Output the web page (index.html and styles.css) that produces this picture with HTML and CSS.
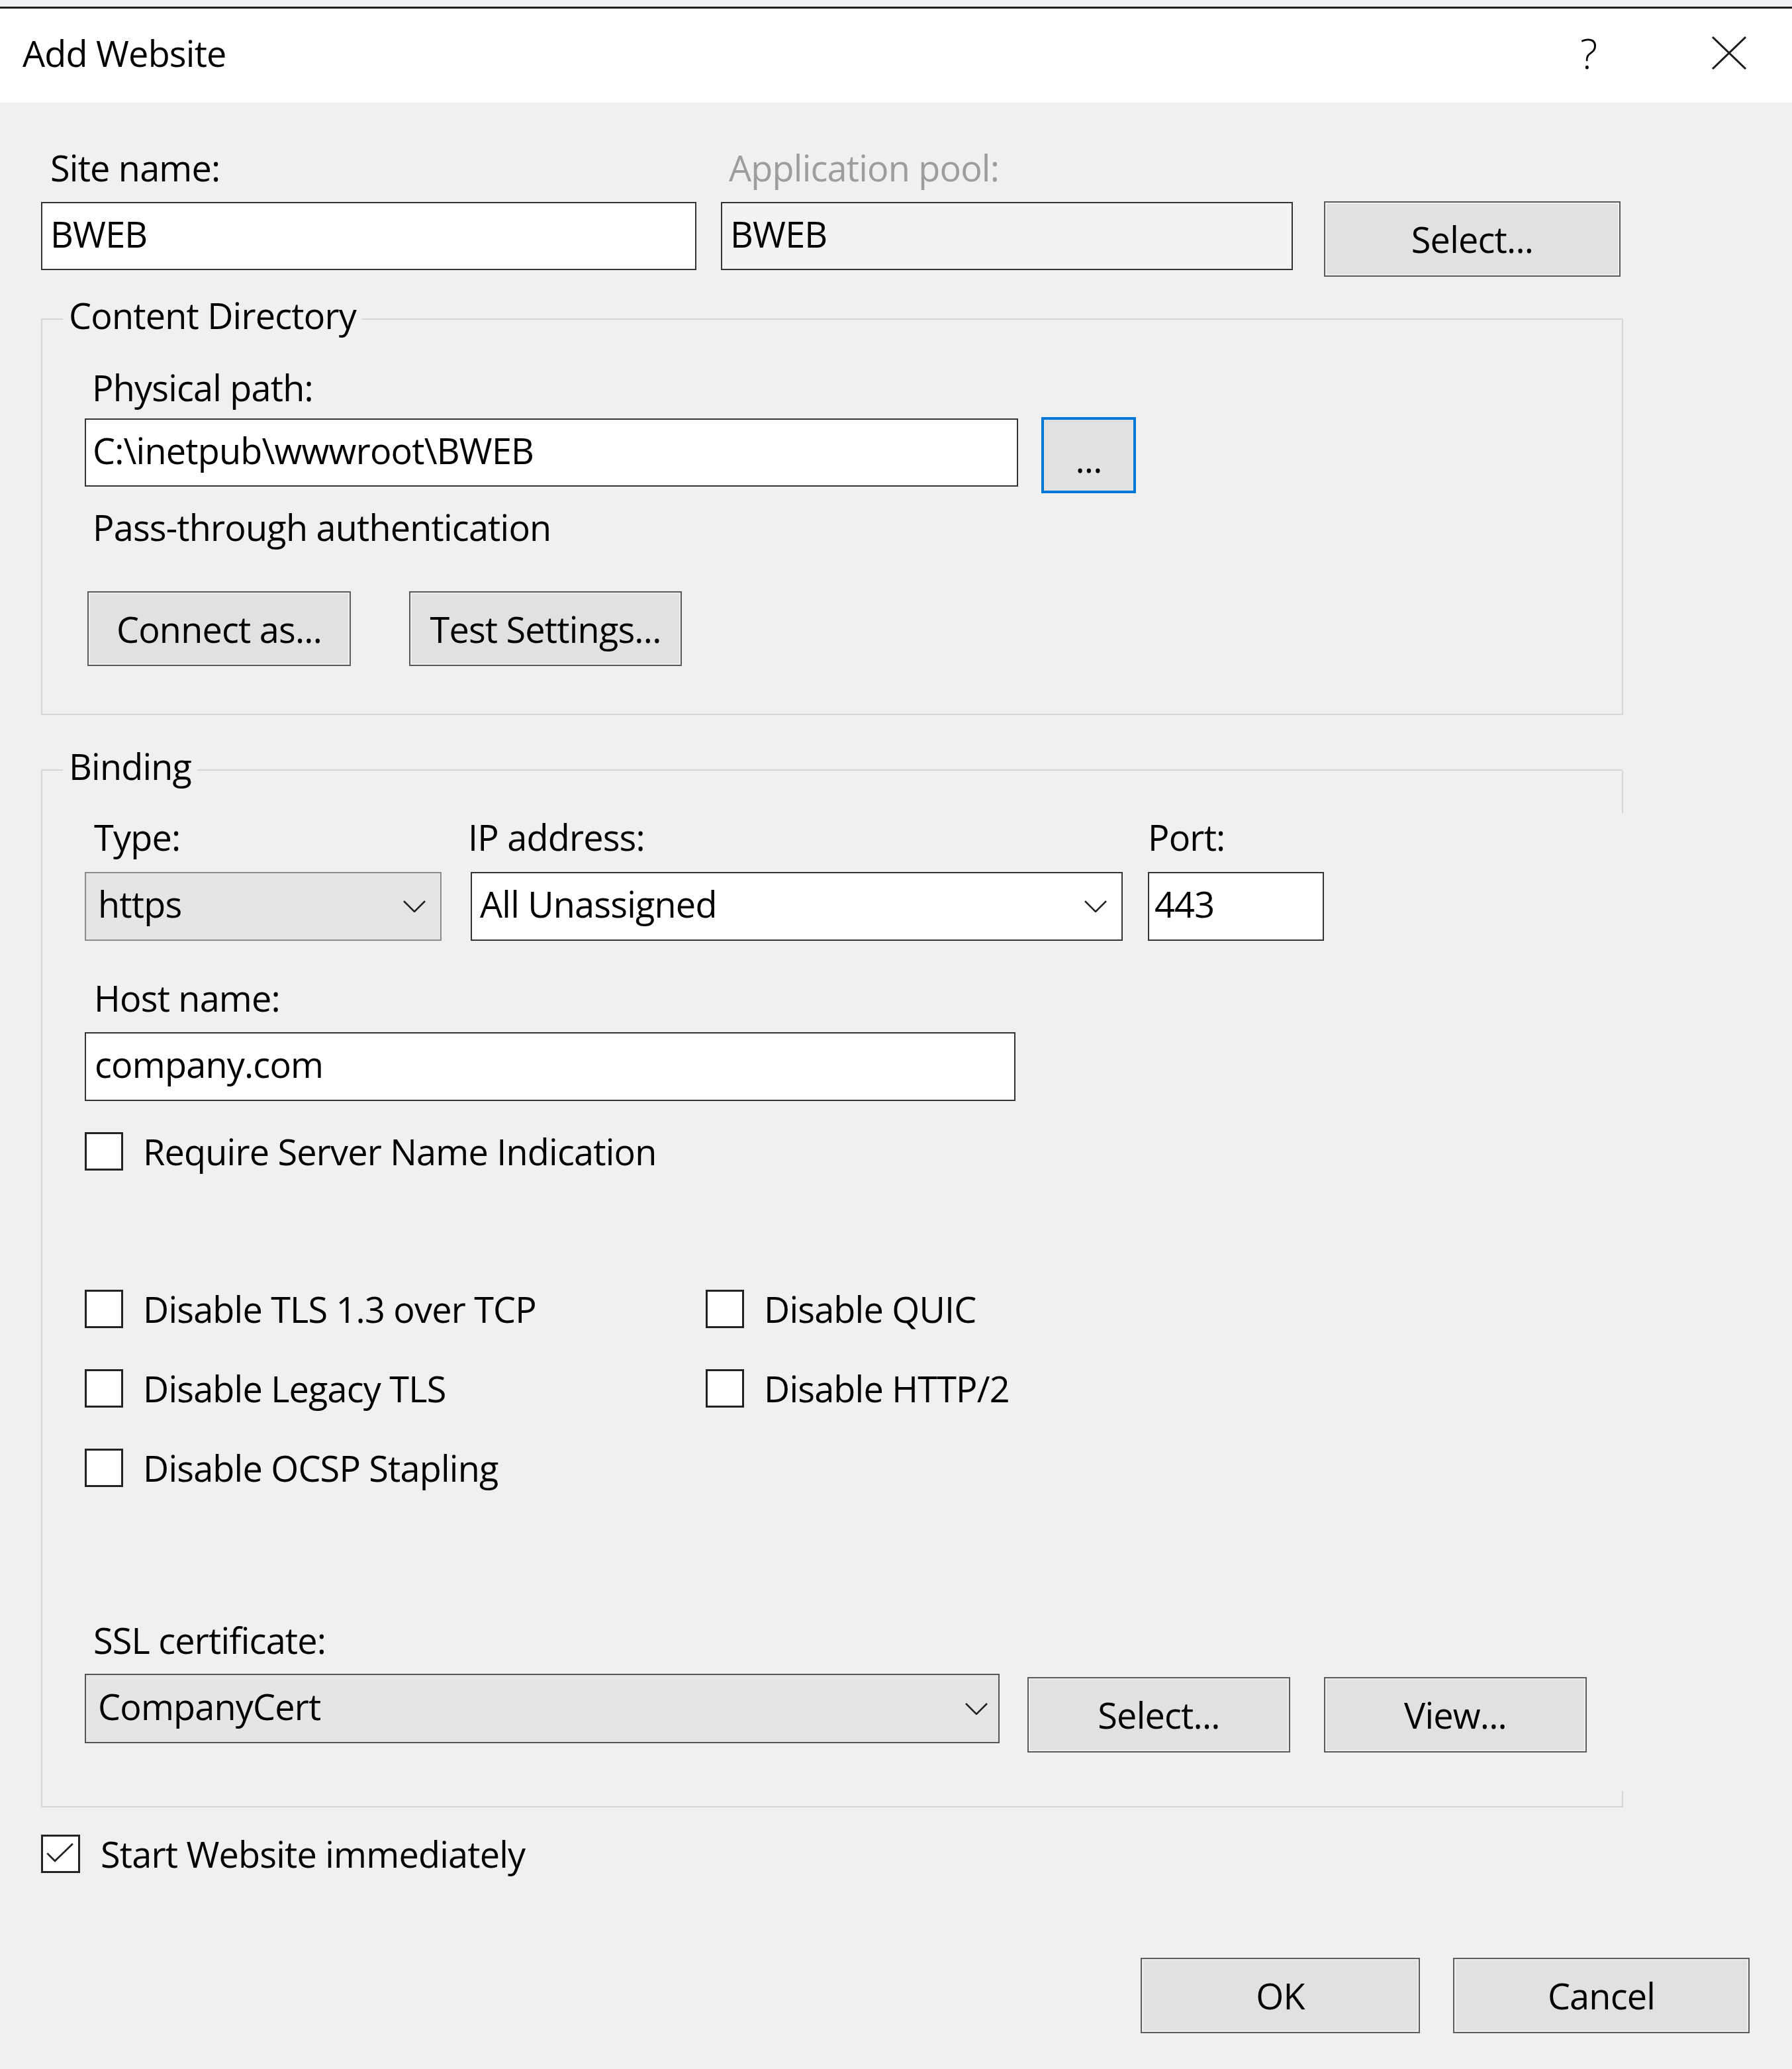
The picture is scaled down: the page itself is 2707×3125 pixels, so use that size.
FILE: index.html
```html
<!DOCTYPE html>
<html lang="en">
<head>
<meta charset="utf-8">
<title>Add Website</title>
<link rel="stylesheet" href="styles.css">
</head>
<body>
<div class="topstrip"></div>
<div class="titlebar">
  <span class="title">Add Website</span>
  <span class="help">?</span>
  <svg class="close" viewBox="0 0 54 50" aria-label="Close"><path d="M2 1 L52 49 M52 1 L2 49" stroke="#1a1a1a" stroke-width="3" fill="none"/></svg>
</div>
<div class="content">
  <div class="site-row">
    <span class="lbl">Site name:</span>
    <span class="lbl lbl-disabled">Application pool:</span>
    <span></span>
    <div class="input">BWEB</div>
    <div class="input input-readonly">BWEB</div>
    <button type="button" class="btn btn-pool">Select...</button>
  </div>

  <div class="group group-content">
    <div class="group-title">Content Directory</div>
    <span class="lbl lbl-path">Physical path:</span>
    <div class="path-row">
      <div class="input input-path">C:\inetpub\wwwroot\BWEB</div>
      <button type="button" class="btn btn-browse">...</button>
    </div>
    <span class="lbl lbl-pass">Pass-through authentication</span>
    <div class="auth-row">
      <button type="button" class="btn btn-connect">Connect as...</button>
      <button type="button" class="btn btn-test">Test Settings...</button>
    </div>
  </div>

  <div class="group group-binding">
    <div class="group-title">Binding</div>
    <div class="binding-row">
      <div class="field field-type">
        <span class="lbl lbl-type">Type:</span>
        <div class="select select-type"><span>https</span><svg class="chev" viewBox="0 0 34 18"><polyline points="1,1 17,17 33,1" fill="none" stroke="#222" stroke-width="2.5"/></svg></div>
      </div>
      <div class="field field-ip">
        <span class="lbl lbl-ip">IP address:</span>
        <div class="select select-ip"><span>All Unassigned</span><svg class="chev" viewBox="0 0 34 18"><polyline points="1,1 17,17 33,1" fill="none" stroke="#222" stroke-width="2.5"/></svg></div>
      </div>
      <div class="field field-port">
        <span class="lbl lbl-port">Port:</span>
        <div class="input input-port">443</div>
      </div>
    </div>
    <span class="lbl lbl-host">Host name:</span>
    <div class="input input-host">company.com</div>
    <div class="check-row sni-row"><span class="cb"></span><span>Require Server Name Indication</span></div>
    <div class="check-grid">
      <div class="check-row"><span class="cb"></span><span>Disable TLS 1.3 over TCP</span></div>
      <div class="check-row"><span class="cb"></span><span>Disable QUIC</span></div>
      <div class="check-row"><span class="cb"></span><span>Disable Legacy TLS</span></div>
      <div class="check-row"><span class="cb"></span><span>Disable HTTP/2</span></div>
      <div class="check-row"><span class="cb"></span><span>Disable OCSP Stapling</span></div>
    </div>
    <span class="lbl lbl-ssl">SSL certificate:</span>
    <div class="cert-row">
      <div class="select select-cert"><span>CompanyCert</span><svg class="chev" viewBox="0 0 34 18"><polyline points="1,1 17,17 33,1" fill="none" stroke="#222" stroke-width="2.5"/></svg></div>
      <button type="button" class="btn btn-cert-select">Select...</button>
      <button type="button" class="btn btn-view">View...</button>
    </div>
  </div>

  <div class="check-row start-row">
    <span class="cb cb-checked"><svg viewBox="0 0 59 58"><polyline points="7,28 20,41 50,12" fill="none" stroke="#222" stroke-width="3"/></svg></span>
    <span>Start Website immediately</span>
  </div>

  <div class="footer">
    <button type="button" class="btn btn-ok">OK</button>
    <button type="button" class="btn btn-cancel">Cancel</button>
  </div>
</div>
</body>
</html>
```
FILE: styles.css
```css
* { box-sizing: border-box; }
html, body { margin: 0; padding: 0; }
body {
  width: 2707px;
  height: 3125px;
  overflow: hidden;
  background: #f0f0f0;
  color: #000;
  font-family: "Segoe UI", "Open Sans", "Noto Sans", sans-serif;
  font-size: 54px;
  line-height: 74px;
  letter-spacing: -0.8px;
}

/* title bar */
.topstrip { height: 10px; background: #eef0f1; }
.titlebar {
  height: 145px;
  border-top: 3px solid #1e1e1e;
  background: #fff;
  display: flex;
  align-items: center;
  padding: 0 0 8px 34px;
}
.title { flex: 1; font-size: 54px; }
.help { font-size: 62px; font-weight: 300; margin-right: 172px; letter-spacing: 0; }
.close { width: 54px; height: 50px; margin-right: 68px; }

.content { padding: 61px 0 0 62px; }

.lbl { display: block; padding-left: 14px; white-space: nowrap; }
.lbl-disabled { color: #9d9d9d; padding-left: 12px; }

.input {
  height: 103px;
  border: 2px solid #333;
  background: #fff;
  padding: 0 0 8px 12px;
  display: flex;
  align-items: center;
  white-space: nowrap;
}
.input-readonly { background: #f3f3f3; }

.btn {
  font: inherit;
  letter-spacing: inherit;
  color: #000;
  background: #e1e1e1;
  border: 2px solid #5c5c5c;
  box-shadow: inset 0 0 0 2px #efefef;
  padding: 0;
  margin: 0;
  display: flex;
  align-items: center;
  justify-content: center;
}

/* site row */
.site-row {
  display: grid;
  grid-template-columns: 990px 864px 458px;
  column-gap: 37px;
  row-gap: 15px;
  align-items: start;
}
.btn-pool { width: 448px; height: 114px; margin-left: 10px; margin-top: -1px; }

/* group boxes */
.group {
  width: 2390px;
  border: 2px solid #d6d6d6;
  padding: 0 0 72px 64px;
}
.group-title {
  width: fit-content;
  margin: -44px 0 0 -33px;
  padding: 0 9px;
  background: #f0f0f0;
}
.group-content { margin-top: 63px; }

.lbl-path { margin-top: 35px; padding-left: 11px; }
.path-row { display: flex; align-items: flex-start; margin-top: 10px; }
.input-path { width: 1410px; padding-left: 10px; }
.btn-browse {
  width: 143px;
  height: 115px;
  margin: -2px 0 0 35px;
  border: 4px solid #0078d7;
  box-shadow: none;
  padding-top: 10px;
}
.lbl-pass { margin-top: 14px; padding-left: 12px; }
.auth-row { display: flex; margin-top: 60px; }
.btn-connect { width: 398px; height: 113px; margin-left: 4px; }
.btn-test { width: 412px; height: 113px; margin-left: 88px; }

/* binding */
.group-binding {
  margin-top: 82px;
  padding-bottom: 81px;
  border-right-color: transparent;
  background:
    linear-gradient(#d6d6d6, #d6d6d6) right top / 2px 66px no-repeat,
    linear-gradient(#d6d6d6, #d6d6d6) right bottom / 2px 25px no-repeat;
  background-origin: border-box;
}
.binding-row { display: flex; margin-top: 33px; }
.field { display: flex; flex-direction: column; gap: 16px; }
.field-type { width: 539px; }
.field-ip { width: 985px; margin-left: 44px; }
.field-port { width: 266px; margin-left: 38px; }
.lbl-ip { padding-left: 0; margin-left: -4px; }
.lbl-port { padding-left: 0; }

.select {
  display: flex;
  align-items: center;
  justify-content: space-between;
  white-space: nowrap;
  height: 104px;
  padding: 0 22px 8px 18px;
}
.select-type { background: #e5e5e5; border: 2px solid #8c8c8c; }
.select-ip { background: #fff; border: 2px solid #333; padding-left: 12px; }
.chev { width: 34px; height: 18px; margin-top: 8px; flex: none; }
.input-port { height: 104px; padding-left: 8px; }

.lbl-host { margin-top: 49px; }
.input-host { width: 1406px; height: 104px; margin-top: 15px; padding-left: 13px; }

.check-row { display: flex; align-items: center; white-space: nowrap; }
.cb {
  width: 58px;
  height: 58px;
  border: 3px solid #222;
  background: #fff;
  margin-right: 30px;
  flex: none;
}
.sni-row { margin-top: 39px; }
.check-grid {
  display: grid;
  grid-template-columns: 938px auto;
  row-gap: 46px;
  margin-top: 164px;
}

.lbl-ssl { margin-top: 186px; padding-left: 13px; }
.cert-row { display: flex; align-items: flex-start; margin-top: 14px; }
.select-cert {
  width: 1382px;
  height: 105px;
  background: #e5e5e5;
  border: 2px solid #555;
  padding-right: 16px;
}
.btn-cert-select { width: 397px; height: 114px; margin: 5px 0 0 42px; }
.btn-view { width: 397px; height: 114px; margin: 5px 0 0 51px; }

/* bottom */
.start-row { margin-top: 33px; }
.cb-checked { width: 59px; margin-right: 31px; }
.cb-checked svg { display: block; width: 53px; height: 52px; }

.footer {
  display: flex;
  justify-content: flex-end;
  gap: 50px;
  padding-right: 64px;
  margin-top: 120px;
}
.btn-ok { width: 422px; height: 114px; }
.btn-cancel { width: 448px; height: 114px; }
```
